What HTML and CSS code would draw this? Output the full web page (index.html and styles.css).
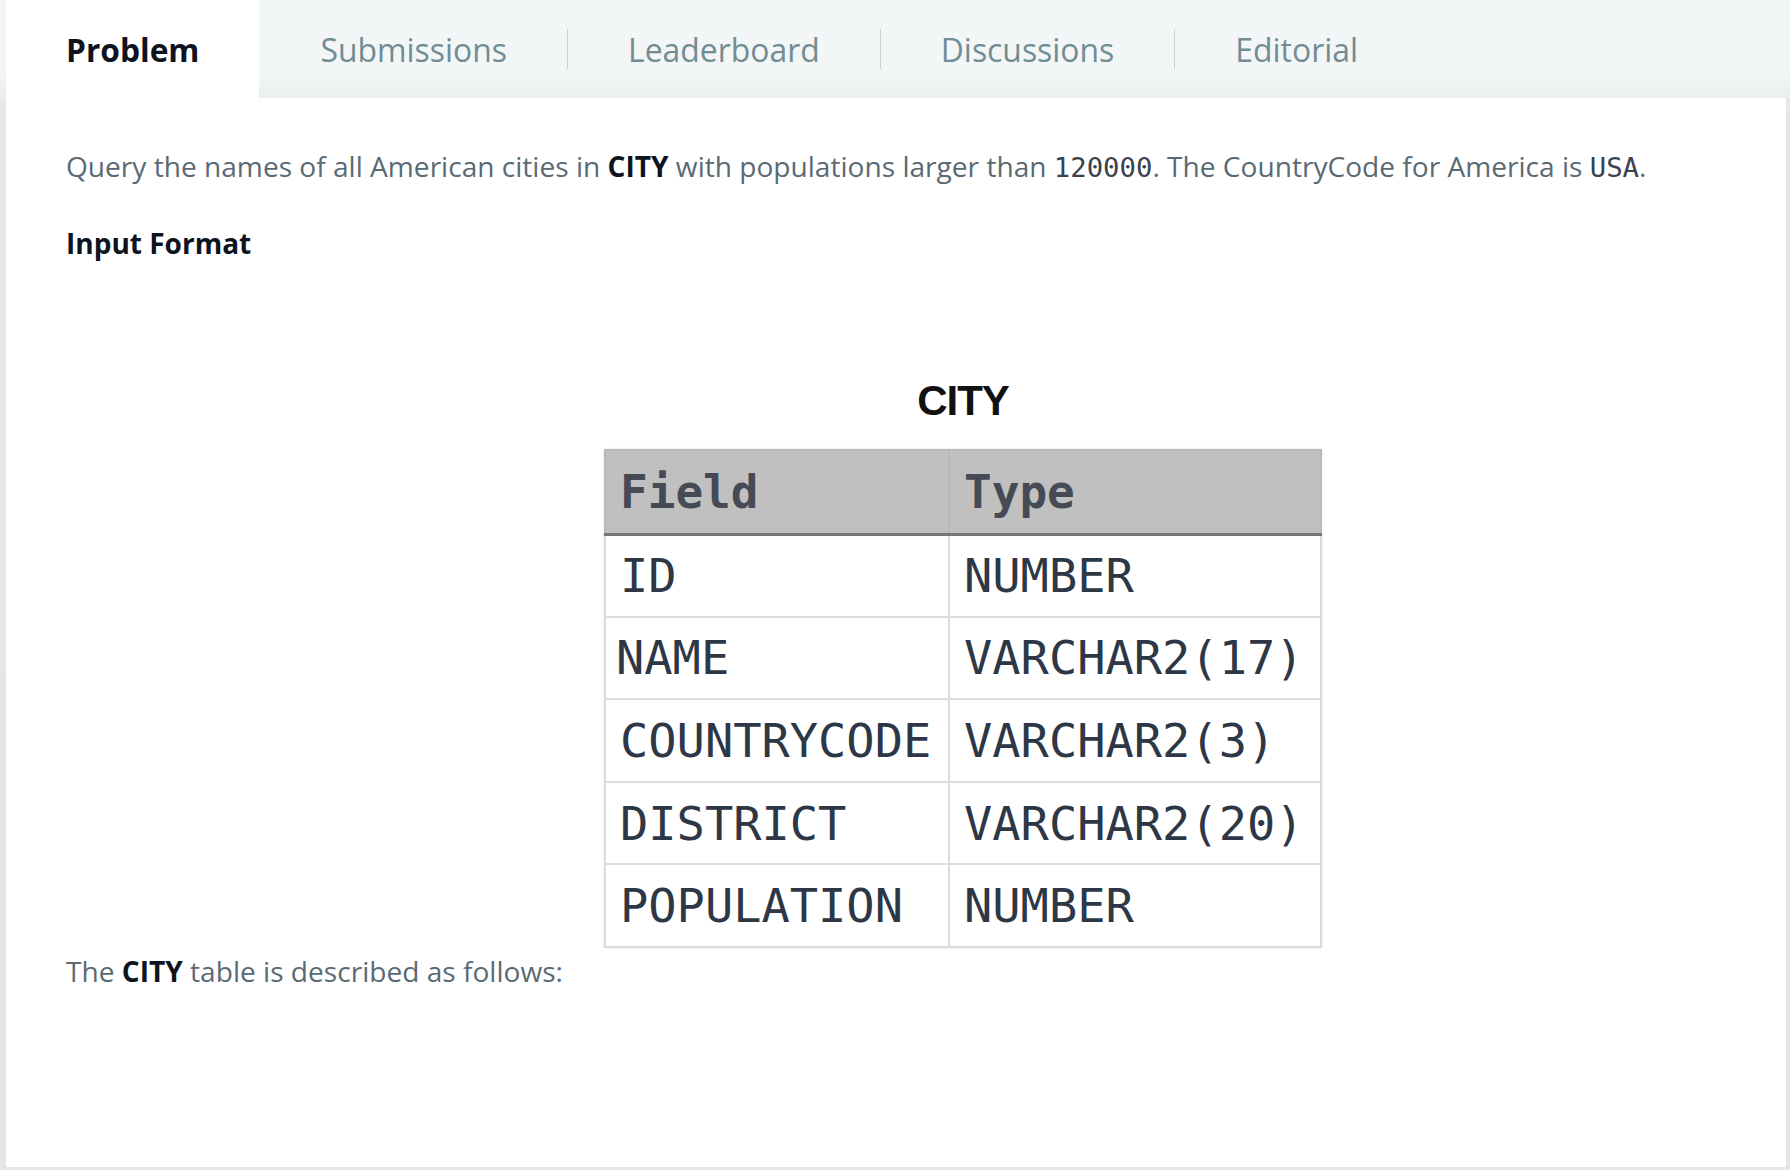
FILE: index.html
```html
<!DOCTYPE html>
<html lang="en">
<head>
<meta charset="utf-8">
<title>Problem</title>
<link rel="stylesheet" href="styles.css">
</head>
<body>
<div class="page">
  <nav class="tabs">
    <div class="tab tab-active">Problem</div>
    <div class="tab tab-first">Submissions</div>
    <div class="tab">Leaderboard</div>
    <div class="tab">Discussions</div>
    <div class="tab">Editorial</div>
  </nav>
  <main class="content">
    <p class="text">Query the names of all American cities in <strong>CITY</strong> with populations larger than <code>120000</code>. The CountryCode for America is <code>USA</code>.</p>
    <h3 class="heading">Input Format</h3>
    <figure class="figure">
      <div class="fig-title">CITY</div>
      <table class="schema">
        <thead>
          <tr><th class="col-field">Field</th><th>Type</th></tr>
        </thead>
        <tbody>
          <tr><td>ID</td><td>NUMBER</td></tr>
          <tr><td class="nudge">NAME</td><td>VARCHAR2(17)</td></tr>
          <tr><td>COUNTRYCODE</td><td>VARCHAR2(3)</td></tr>
          <tr><td>DISTRICT</td><td>VARCHAR2(20)</td></tr>
          <tr><td>POPULATION</td><td>NUMBER</td></tr>
        </tbody>
      </table>
    </figure>
    <p class="text text-after">The <strong>CITY</strong> table is described as follows:</p>
  </main>
</div>
</body>
</html>
```

FILE: styles.css
```css
* { box-sizing: border-box; }

html, body {
  margin: 0;
  height: 100%;
}

body {
  background: #e2e6e7;
  font-family: "Open Sans", "Liberation Sans", sans-serif;
}

.page {
  height: 100vh;
  display: flex;
  flex-direction: column;
  padding-left: 6px;
  padding-bottom: 3px;
  background: linear-gradient(to bottom, #eef1f2 0px, #e3e7e8 120px, #e2e6e7 100%);
}

.tabs {
  display: flex;
  align-items: center;
  height: 98px;
  flex: 0 0 98px;
  margin-left: -6px;
  padding-left: 6px;
  background: linear-gradient(to bottom, #f3f6f7 0%, #f3f6f7 76%, #e8edee 100%);
}

.tab {
  height: 40px;
  line-height: 42px;
  padding: 0 60px;
  border-left: 1px solid #c5d3d5;
  font-size: 31.9px;
  color: #718d93;
  white-space: nowrap;
}

.tab-first {
  border-left-color: transparent;
}

.tab-active {
  align-self: stretch;
  height: 98px;
  line-height: 92px;
  padding: 4px 60px 0 60px;
  border-left: none;
  background: #ffffff;
  color: #0e141e;
  font-weight: 700;
  font-size: 31.7px;
}

.content {
  flex: 1;
  background: #ffffff;
  margin-right: 4px;
  padding: 47px 60px 0 60px;
}

.text {
  margin: 0;
  font-size: 28.1px;
  line-height: 42px;
  color: #5a6a74;
}

.text strong {
  color: #0e141e;
  font-weight: 700;
}

.text code {
  font-family: "DejaVu Sans Mono", "Liberation Mono", monospace;
  font-size: 27.3px;
  color: #39424e;
}

.heading {
  margin: 33px 0 0 0;
  font-size: 28px;
  line-height: 42px;
  font-weight: 700;
  color: #0e141e;
}

.figure {
  margin: 116px 0 0 538px;
  width: 718px;
}

.fig-title {
  text-align: center;
  font-family: "Liberation Sans", Arial, sans-serif;
  font-weight: 700;
  font-size: 42px;
  line-height: 42px;
  letter-spacing: -1px;
  color: #111111;
  margin-bottom: 27px;
}

.schema {
  width: 718px;
  border-collapse: collapse;
  font-family: "DejaVu Sans Mono", "Liberation Mono", monospace;
  font-size: 47px;
  color: #2d3746;
  box-shadow: 0 0 2px rgba(0, 0, 0, 0.12);
}

.schema th,
.schema td {
  text-align: left;
  padding: 0 0 0 14px;
  border: 2px solid #dcdcdc;
  height: 82.6px;
  white-space: nowrap;
}

.schema th {
  background: #c0c0c0;
  color: #454a55;
  font-weight: 700;
  font-size: 46px;
  border-color: #b9b9b9;
  border-bottom: 3px solid #777777;
  height: 84px;
}

.schema .col-field {
  width: 344px;
}

.schema td.nudge {
  padding-left: 10px;
}

.text-after {
  margin-top: 2px;
}
```
